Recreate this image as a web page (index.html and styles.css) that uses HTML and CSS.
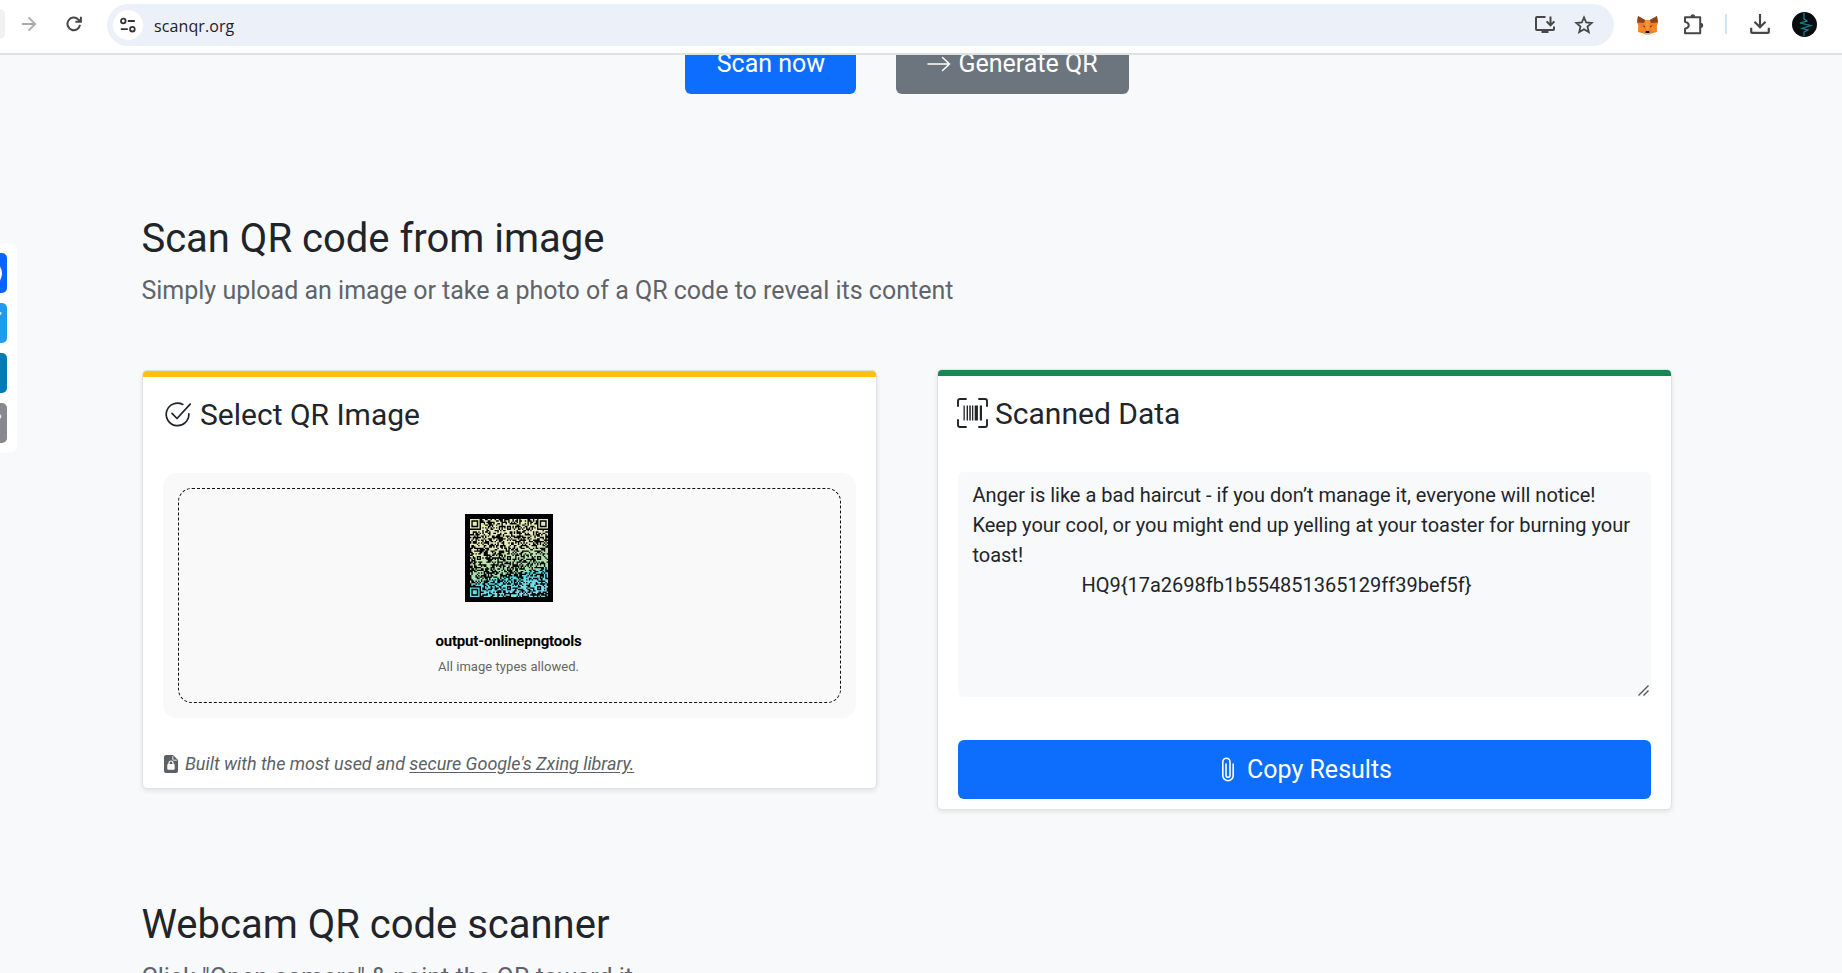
FILE: index.html
```html
<!DOCTYPE html>
<html lang="en">
<head>
<meta charset="utf-8">
<title>Scan QR</title>
<link rel="stylesheet" href="styles.css">
</head>
<body>
<header class="toolbar">
  <span class="back-edge"></span>
  <svg class="forward" width="16" height="16" viewBox="0 0 16 16" fill="none" stroke="#aaa" stroke-width="1.8"><path d="M1 8h13M7.5 1.3 14.2 8l-6.7 6.7"/></svg>
  <svg class="reload" width="16" height="16" viewBox="0 0 16 16" fill="none" stroke="#474747" stroke-width="2"><path d="M14 8.8A6.3 6.3 0 1 1 12.2 3.4L14.6 5.6M14.9 0.8V5.7H9.4"/></svg>
  <div class="omnibox">
    <span class="site-info"><svg width="18" height="16" viewBox="0 0 18 16" fill="none" stroke="#333" stroke-width="1.8"><circle cx="4.3" cy="4" r="2.3"/><path d="M8.8 4h7M1.8 12.2h7"/><circle cx="13.4" cy="12.2" r="2.3"/></svg></span>
    <span class="url">scanqr.org</span>
    <svg class="install" width="22" height="20" viewBox="0 0 22 20" fill="none" stroke="#474747" stroke-width="2"><path d="M11.5 2H3Q2 2 2 3v11q0 1 1 1h16q1 0 1-1v-2.5M16.5 1.5V10M12.6 6.4l3.9 3.9 3.9-3.9"/><path d="M7.5 15h7v3h-7z" fill="#474747" stroke="none"/></svg>
    <svg class="star" width="20" height="20" viewBox="0 0 20 20" fill="none" stroke="#474747" stroke-width="1.8"><path d="m10 2.4 2.2 5.1 5.5.5-4.2 3.6 1.3 5.5-4.8-2.9-4.8 2.9 1.3-5.5L2.3 8l5.5-.5z"/></svg>
  </div>
  <svg class="fox" width="21" height="20" viewBox="0 0 21 20"><path d="M1 1 8 5h5l7-4 1 6-1.4 5L20 17l-5 1.2-2.5 1.3h-4L6 18.2 1 17l.7-5L0 7z" fill="#ee8127"/><path d="M1 1 8.2 5 7 8 0 7.5zM20 1l-7.2 4L14 8l7-.5z" fill="#8a4520"/><path d="m8 5 .8 7L10 16h1l1.2-4L13 5z" fill="#f79436"/><path d="m1 12 5 .5 1.5 3L1 17zM20 12l-5 .5-1.5 3L20 17z" fill="#f58a2c"/><path d="m5 10.5 3 .5v1.3zM16 10.5l-3 .5v1.3z" fill="#333"/><path d="M7.8 16.2h5.4l.3 2.3-1 .8h-4l-1-.8z" fill="#c9b5a4"/><path d="M8.6 16h3.8l.2 2H8.4z" fill="#111"/></svg>
  <svg class="puzzle" width="22" height="22" viewBox="0 0 22 22" fill="none" stroke="#474747" stroke-width="2" stroke-linejoin="round"><path d="M2 4.2h15.2V20.200H2v-4.500q3.800-1 3.800-3.500T2 8.700z"/><path d="M7.500 4a2.300 2.700 0 0 1 4.600 0zM17.500 9.700a2.700 2.600 0 0 1 0 5.200z" fill="#474747" stroke="none"/></svg>
  <span class="divider"></span>
  <svg class="download" width="20" height="20" viewBox="0 0 20 20" fill="none" stroke="#474747" stroke-width="2.200"><path d="M10 0v12.500M4.500 7.700l5.500 5.500 5.500-5.500M1.200 13.800V18q0 .9.900.9h15.800q.9 0 .9-.9v-4.200"/></svg>
  <svg class="avatar" width="25" height="25" viewBox="0 0 25 25" fill="none"><circle cx="12.500" cy="12.500" r="12.500" fill="#080d10"/><path d="M12 1v6l3 2-7 2 11 2.500-9 3 6 1.500-4 2v4" stroke="#159a9f" stroke-width="1.100"/><path d="M8 11l11 2.500-9 3" stroke="#12636a" stroke-width=".8"/></svg>
</header>

<main class="page">
  <aside class="share">
    <span class="tile facebook"><svg width="40" height="40" viewBox="0 0 40 40"><circle cx="22" cy="20.500" r="13" fill="#fff"/></svg></span>
    <span class="tile twitter"><svg width="40" height="40" viewBox="0 0 40 40"><path d="m32 9.500 3-.8-1.300 1.500 1.300.2-2 1.800z" fill="#d9eefd"/></svg></span>
    <span class="tile linkedin"></span>
    <span class="tile mail"><svg width="40" height="40" viewBox="0 0 40 40"><circle cx="32" cy="13.500" r="2.400" fill="#e5e5ea"/></svg></span>
  </aside>

  <div class="container">
    <div class="actions">
      <a class="btn btn-primary">Scan now</a>
      <a class="btn btn-secondary"><svg width="24" height="20" viewBox="0 0 24 20" fill="none" stroke="#fff" stroke-width="1.500" stroke-linecap="round" stroke-linejoin="round"><path d="M1 10h21.500M15.500 3.500 22.500 10l-7 6.500"/></svg>Generate QR</a>
    </div>

    <section class="intro">
      <h2>Scan QR code from image</h2>
      <p class="lead">Simply upload an image or take a photo of a QR code to reveal its content</p>
    </section>

    <div class="cards">
      <article class="card card-select">
        <h4 class="card-title"><svg class="icon-check" width="28" height="26" viewBox="0 0 28 26" fill="none" stroke="#212529" stroke-width="1.700" stroke-linecap="round" stroke-linejoin="round"><path d="M18.800 3.400A11.300 11.300 0 1 0 24.800 12.800M8 12.300l5 5.200L26.200 3.200"/></svg>Select QR Image</h4>
        <div class="dropzone">
          <div class="drop-inner">
            <svg class="qr" width="88" height="88" viewBox="-3.650 -3.650 64.300 64.300">
              <defs><linearGradient id="tint" gradientUnits="userSpaceOnUse" x1="22" y1="0" x2="34" y2="57">
                <stop offset="0" stop-color="#e5ebb5"/><stop offset=".35" stop-color="#e4e9bb"/><stop offset=".55" stop-color="#b2dfaa"/><stop offset=".7" stop-color="#a5dfb0"/><stop offset=".74" stop-color="#54dce0"/><stop offset="1" stop-color="#86dff0"/>
              </linearGradient></defs>
              <rect x="-3.650" y="-3.650" width="64.300" height="64.300" fill="#000"/>
              <path id="modules" fill="url(#tint)"/>
            </svg>
            <strong class="file-name">output-onlinepngtools</strong>
            <span class="file-hint">All image types allowed.</span>
          </div>
        </div>
        <p class="note"><svg width="14" height="18" viewBox="0 0 14 18"><path d="M2 0h7l5 5v11a2 2 0 0 1-2 2H2a2 2 0 0 1-2-2V2a2 2 0 0 1 2-2z" fill="#5c6166"/><path d="M8.800 1.200v3q0 1 1 1h3" fill="none" stroke="#fff" stroke-width=".9"/><rect x="3.300" y="9" width="7.400" height="5.800" rx="1" fill="#fff"/><path d="M5 9.500V8a2 2 0 0 1 4 0v1.500" fill="none" stroke="#fff" stroke-width="1.200"/></svg><em>Built with the most used and <u>secure Google's Zxing library.</u></em></p>
      </article>

      <article class="card card-result">
        <h4 class="card-title"><svg class="icon-scan" width="31" height="30" viewBox="0 0 31 30" fill="none" stroke="#212529" stroke-width="1.900" stroke-linecap="round"><path d="M1 8V3q0-2 2-2h6M22 1h6q2 0 2 2v5M30 22v5q0 2-2 2h-6M9 29H3q-2 0-2-2v-5"/><path d="M6.500 7.500h1.300v15H6.500zM9.600 7.500H11v15H9.600zM12.300 7.500h1.500v15h-1.500zM15 7.500h1.300v15H15zM17.700 7.500h3.200v15h-3.200zM22.800 7.500H25v15h-2.200z" fill="#212529" stroke="none"/></svg>Scanned Data</h4>
        <div class="result-text"><p>Anger is like a bad haircut - if you don’t manage it, everyone will notice! Keep your cool, or you might end up yelling at your toaster for burning your toast!</p><p class="flag">HQ9{17a2698fb1b554851365129ff39bef5f}</p>
          <svg class="grip" width="11" height="11" viewBox="0 0 11 11" stroke="#555" stroke-width="1.400"><path d="M.5 10.500 10.500.5M5.500 10.500l5-5"/></svg>
        </div>
        <a class="btn btn-primary btn-copy"><svg width="12" height="25" viewBox="0 0 12 25" fill="none" stroke="#fff" stroke-width="1.600" stroke-linecap="round"><path d="M11.200 7v11.500a5.200 5.200 0 0 1-10.400 0V4.800a3.600 3.600 0 0 1 7.200 0v13.400a2 2 0 0 1-4 0V7"/></svg>Copy Results</a>
      </article>
    </div>

    <section class="webcam">
      <h2>Webcam QR code scanner</h2>
      <p class="lead">Click "Open camera" &amp; point the QR toward it</p>
    </section>
  </div>
</main>
<script src="qr.js"></script>
</body>
</html>
```
FILE: styles.css
```css
* { box-sizing: border-box; }
body { margin: 0; height: 973px; overflow: hidden; display: flex; flex-direction: column; font: 20px/1.5 Roboto, sans-serif; color: #212529; background: #f8f9fb; }
h2, h4, p { margin: 0; font-weight: 400; }
svg { display: block; flex: none; }

.toolbar { flex: none; height: 55px; display: flex; align-items: center; padding: 0 25px 5px 0; background: #fff; border-bottom: 2px solid #dfe3df; }
.back-edge { width: 5px; height: 30px; border-radius: 0 12px 12px 0; background: #f1f1f1; margin-right: 16px; }
.forward { margin-right: 29px; }
.reload { margin-right: 25px; }
.omnibox { width: 1507px; height: 42px; border-radius: 21px; background: #ebf0f9; display: flex; align-items: center; padding: 0 20px 0 6px; margin-top: 1px; }
.site-info { width: 30px; height: 30px; border-radius: 50%; background: #fff; display: flex; align-items: center; justify-content: center; margin-right: 10px; }
.url { flex: 1; font: 16px/24px "Open Sans", sans-serif; color: #1f2023; padding: 2px 0 0 1px; letter-spacing: .1px; }
.install { margin-right: 18px; }
.fox { margin: 2px 25px 0 23px; }
.puzzle { margin-right: 20px; }
.divider { width: 2px; height: 20px; background: #d3e3fd; margin-right: 23px; }
.download { margin-right: 22px; }

.page { flex: 1; min-height: 0; overflow: hidden; position: relative; }
.share { position: absolute; left: -43px; top: 188px; width: 60px; padding: 10px; border-radius: 8px; background: #fff; display: flex; flex-direction: column; gap: 10px; }
.tile { height: 40px; border-radius: 5px; overflow: hidden; }
.facebook { background: #0866ff; }
.twitter { background: #1d9bf0; }
.linkedin { background: #007bb5; }
.mail { background: #888990; }

.container { width: 1530px; margin-left: 142px; }
.actions { display: flex; justify-content: center; gap: 40px; margin-top: -20px; }
.btn { display: flex; align-items: center; justify-content: center; height: 59px; border-radius: 6px; font-size: 25px; color: #fff; padding: 0 31px; }
.btn-primary { background: #0d6efd; }
.btn-secondary { background: #6c757d; gap: 7px; }
.actions .btn { padding-bottom: 2px; }
.actions .btn-primary { width: 171px; }
.intro { margin-top: 121px; height: 154px; }
.intro h2 { margin-bottom: 9px; }
h2 { font-size: 40px; line-height: 48px; margin: 0 0 10px -.6px; }
.lead { font-size: 25px; line-height: 37.5px; color: #5f6469; white-space: nowrap; margin-left: -.6px; }

.cards { display: flex; justify-content: space-between; height: 441px; }
.card { width: 735px; background: #fff; border: 1px solid #dfe1e3; border-radius: 5px; box-shadow: 0 2px 5px rgba(0, 0, 0, .09); padding: 0 20px; display: flex; flex-direction: column; }
.card::before { content: ""; flex: none; height: 6px; margin: 0 -20px; border-radius: 4px 4px 0 0; background: #198754; }
.card-select { height: 419px; margin-top: 1px; }
.card-select::before { background: #ffc107; }
.card-result { height: 441px; }
.card-title { display: flex; align-items: center; font-size: 30px; line-height: 36px; margin: 20px 0 40px; }
.icon-check { margin: -2px 8px 0 1px; }
.icon-scan { margin: -2px 7px 0 -1px; }
.dropzone { height: 245px; border-radius: 14px; background: #f9f9f9; padding: 15px; }
.drop-inner { height: 215px; border: 1px dashed #111; border-radius: 14px; display: flex; flex-direction: column; align-items: center; padding: 25px 2px 0 0; }
.file-name { font-size: 15px; line-height: 20px; font-weight: 700; color: #000; letter-spacing: -.18px; margin-top: 29px; }
.file-hint { font-size: 13px; line-height: 20px; color: #666; margin-top: 6px; letter-spacing: .05px; }
.note { display: flex; align-items: center; gap: 7px; font-size: 18px; line-height: 27px; margin-top: 32px; color: #5c6166; padding-left: 1px; letter-spacing: -.03px; }
.note u { text-underline-offset: 2px; }
.result-text { position: relative; height: 225px; margin-bottom: 43px; border-radius: 5px; background: #f8f9fb; padding: 8px 15px 8px 14.4px; }
.flag { padding-left: 109px; }
.grip { position: absolute; right: 2px; bottom: 1px; }
.btn-copy { gap: 13px; padding-left: 36px; }
.webcam { margin-top: 91px; }
```
FILE: qr.js
```js
// Draws a 57x57 QR-style module matrix.
const size = 57;
const centers = [6, 28, 50];
let seed = 9173;
const random = () => (seed = (seed * 1103515245 + 12345) % 2147483648) / 2147483648;

function isLit(x, y) {
  for (const [cx, cy] of [[3, 3], [53, 3], [3, 53]]) {
    const d = Math.max(Math.abs(x - cx), Math.abs(y - cy));
    if (d <= 4) return d !== 4 && d !== 2;
  }
  for (const cx of centers) {
    for (const cy of centers) {
      const d = Math.max(Math.abs(x - cx), Math.abs(y - cy));
      if (d <= 2) return d !== 1;
    }
  }
  if (x === 6 || y === 6) return (x + y) % 2 === 0;
  return random() < 0.53;
}

let path = "";
for (let y = 0; y < size; y++) {
  for (let x = 0; x < size; x++) {
    if (isLit(x, y)) path += `M${x} ${y}h1v1h-1z`;
  }
}
document.getElementById("modules").setAttribute("d", path);
```
